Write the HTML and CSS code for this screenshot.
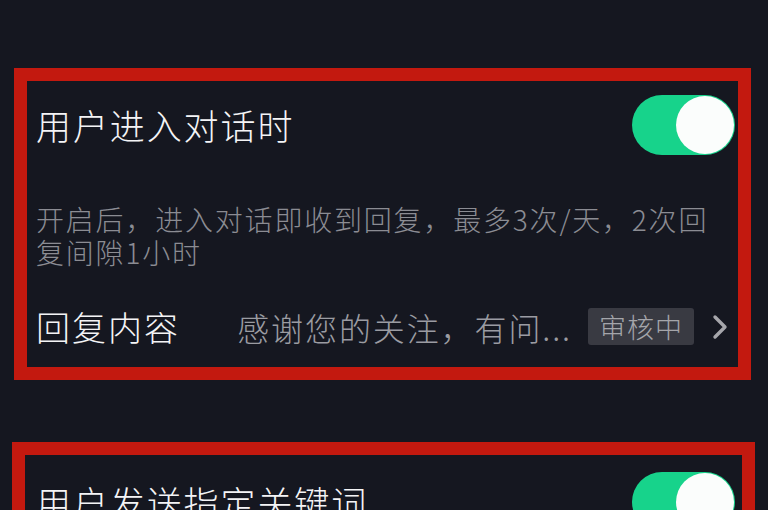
FILE: index.html
```html
<!DOCTYPE html>
<html lang="zh-CN">
<head>
<meta charset="utf-8">
<title>自动回复</title>
<link rel="stylesheet" href="styles.css">
</head>
<body>
<div class="page">
  <section class="card card--first">
    <div class="card-head">
      <span class="title">用户进入对话时</span>
      <span class="toggle"><span class="knob"></span></span>
    </div>
    <p class="desc">开启后，进入对话即收到回复，最多3次/天，2次回复间隙1小时</p>
    <div class="reply-row">
      <span class="reply-label">回复内容</span>
      <span class="reply-right">
        <span class="preview">感谢您的关注，有问...</span>
        <span class="badge">审核中</span>
        <svg class="chevron" width="16" height="26" viewBox="0 0 16 26"><polyline points="3,3 13,13 3,23" fill="none" stroke="#a6a6ab" stroke-width="3.4" stroke-linecap="round" stroke-linejoin="round"/></svg>
      </span>
    </div>
  </section>
  <section class="card card--second">
    <div class="card-head">
      <span class="title">用户发送指定关键词</span>
      <span class="toggle"><span class="knob"></span></span>
    </div>
  </section>
</div>
</body>
</html>
```

FILE: styles.css
```css
html, body {
  margin: 0;
  padding: 0;
}
body {
  width: 768px;
  height: 510px;
  overflow: hidden;
  background: #151720;
  font-family: "Noto Sans CJK SC", "Noto Sans", sans-serif;
  font-weight: 300;
  color: #f2f2f4;
}
.page {
  padding-top: 68px;
}
.card {
  border: 13px solid #c3190f;
  padding: 14px 3px 22px 9px;
}
.card--first {
  margin: 0 17px 0 14px;
}
.card--second {
  margin: 62px 13px 0 12px;
  padding-top: 17px;
  padding-right: 7px;
  padding-left: 11px;
}
.card-head {
  display: flex;
  align-items: center;
  justify-content: space-between;
  height: 60px;
}
.title {
  font-size: 35px;
  letter-spacing: 1.9px;
  line-height: 40px;
  color: #f4f4f6;
}
.toggle {
  display: flex;
  justify-content: flex-end;
  align-items: center;
  width: 103px;
  height: 60px;
  border-radius: 30px;
  background: #17d38b;
  padding: 1px;
  box-sizing: border-box;
}
.knob {
  width: 58px;
  height: 58px;
  border-radius: 50%;
  background: #fbfdfc;
}
.desc {
  margin: 48px 0 0 0;
  font-size: 28px;
  letter-spacing: 1.8px;
  line-height: 33px;
  color: #8b8c93;
  padding-right: 20px;
}
.reply-row {
  display: flex;
  align-items: center;
  height: 37px;
  margin-top: 39px;
}
.reply-label {
  font-size: 34px;
  letter-spacing: 2px;
  line-height: 40px;
  color: #f4f4f6;
}
.reply-right {
  margin-left: auto;
  display: flex;
  align-items: center;
  margin-right: 7px;
}
.preview {
  font-size: 32px;
  letter-spacing: 1.9px;
  line-height: 40px;
  color: #9b9ca2;
}
.badge {
  margin-left: 16px;
  height: 37px;
  line-height: 37px;
  padding: 0 11px;
  font-size: 27px;
  letter-spacing: 1px;
  background: #393a42;
  color: #a4a5aa;
  border-radius: 3px;
}
.chevron {
  display: block;
  margin-left: 18px;
}
```
